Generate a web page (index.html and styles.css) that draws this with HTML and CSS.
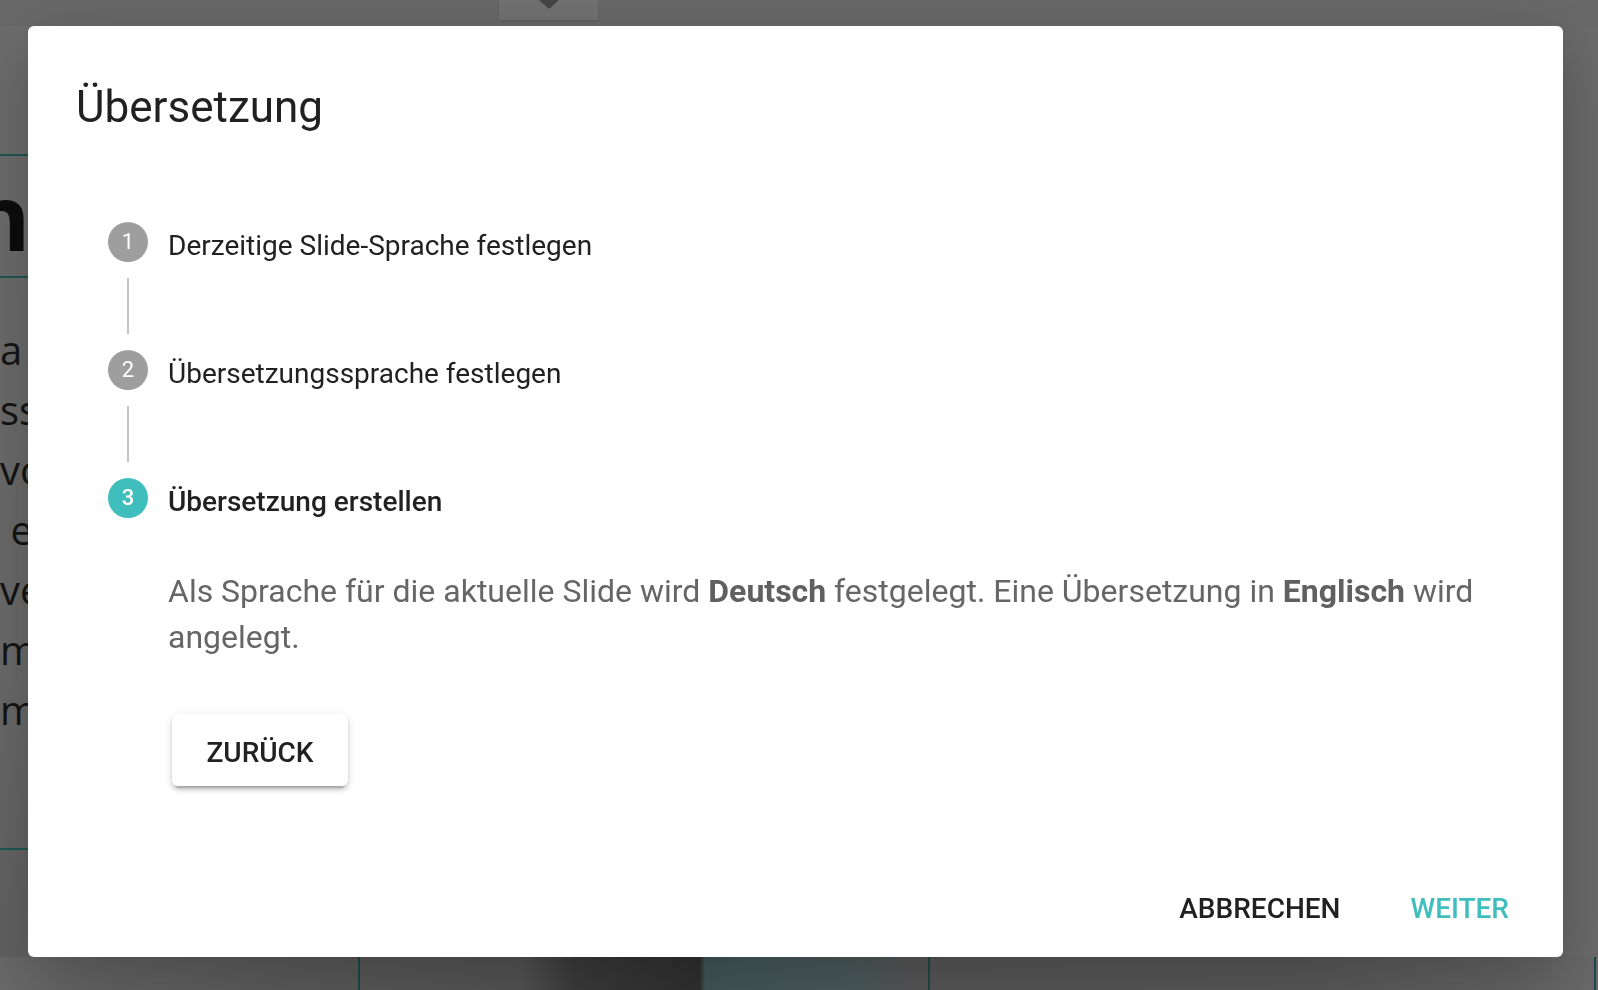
FILE: index.html
```html
<!DOCTYPE html>
<html lang="de">
<head>
  <meta charset="UTF-8">
  <title>Übersetzung</title>
  <link rel="stylesheet" href="styles.css">
</head>
<body>
  <div class="page">
    <div class="toolbar">
      <div class="tab"><span class="caret"></span></div>
    </div>
    <div class="workspace">
      <div class="slide">
        <div class="rule rule-top"></div>
        <div class="slide-title">nd</div>
        <div class="rule"></div>
        <div class="slide-text">
          <p>a  </p>
          <p>ssen</p>
          <p>vollen</p>
          <p> ein</p>
          <p>ver</p>
          <p>mit</p>
          <p>mehr</p>
        </div>
        <div class="rule rule-bottom"></div>
      </div>
    </div>
    <div class="filmstrip"></div>
  </div>

  <div class="overlay">
    <div class="dialog">
      <h1 class="dialog-title">Übersetzung</h1>

      <div class="dialog-body">
        <div class="stepper">
          <div class="step done">
            <span class="step-icon">1</span>
            <span class="step-label">Derzeitige Slide-Sprache festlegen</span>
          </div>
          <div class="connector"></div>
          <div class="step done">
            <span class="step-icon">2</span>
            <span class="step-label">Übersetzungssprache festlegen</span>
          </div>
          <div class="connector"></div>
          <div class="step active">
            <span class="step-icon">3</span>
            <span class="step-label">Übersetzung erstellen</span>
          </div>

          <div class="step-content">
            <p class="description">Als Sprache für die aktuelle Slide wird <strong>Deutsch</strong> festgelegt. Eine Übersetzung in <strong>Englisch</strong> wird angelegt.</p>
            <button class="btn btn-raised" type="button">Zurück</button>
          </div>
        </div>
      </div>

      <div class="dialog-actions">
        <button class="btn btn-text" type="button">Abbrechen</button>
        <button class="btn btn-text primary" type="button">Weiter</button>
      </div>
    </div>
  </div>
</body>
</html>
```

FILE: styles.css
```css
html, body {
  margin: 0;
  height: 100%;
  overflow: hidden;
}
body {
  font-family: Roboto, "Liberation Sans", sans-serif;
  background: #686968;
}

/* page behind the dialog */
.page {
  height: 100%;
  display: flex;
  flex-direction: column;
}
.toolbar {
  height: 26px;
  flex: none;
  background: #686968;
}
.tab {
  width: 99px;
  height: 20px;
  margin-left: 499px;
  background: #727272;
  box-shadow: 0 1px 2px rgba(0,0,0,0.15);
  display: flex;
  justify-content: center;
}
.caret {
  width: 0;
  height: 0;
  border-left: 10px solid transparent;
  border-right: 10px solid transparent;
  border-top: 9px solid #454545;
}
.workspace {
  flex: 1;
  background: linear-gradient(90deg, #6f6f6f 0%, #5a5a5a 30%, #585858 60%, #606060 90%, #6c6c6c 100%);
  overflow: hidden;
}
.slide {
  width: 60px;
  background: linear-gradient(180deg, #6d6d6d, #6b6b6b 70%, #626262);
  height: 100%;
  overflow: hidden;
}
.rule {
  height: 2px;
  background: #1f5757;
}
.rule-top { margin-top: 128px; }
.rule-bottom { margin-top: 108px; }
.slide-title {
  font-family: "Open Sans", sans-serif;
  font-weight: 700;
  font-size: 92px;
  line-height: 120px;
  color: #0d0d0d;
  margin-left: -30px;
}
.slide-text {
  font-family: "Open Sans", sans-serif;
  font-size: 40px;
  color: #151515;
  padding-top: 42px;
}
.slide-text p {
  margin: 0;
  line-height: 60px;
  white-space: pre;
}
.filmstrip {
  height: 33px;
  flex: none;
  background:
    linear-gradient(90deg, transparent 358px, #1d4a4a 358px, #1d4a4a 360px, transparent 360px,
      transparent 928px, #1d4a4a 928px, #1d4a4a 930px, transparent 930px,
      transparent 1594px, #1d4a4a 1594px, #1d4a4a 1596px, transparent 1596px),
    linear-gradient(90deg, #6a6a6a 0, #5c5c5c 300px, #555 520px, #3c3c3c 575px, #303030 700px, #44585a 705px, #4d5b5c 860px, #585858 912px, #5a5a5a 1300px, #6a6a6a 1598px);
}

/* dialog */
.overlay {
  position: fixed;
  inset: 0;
  display: flex;
  padding: 26px 35px 33px 28px;
}
.dialog {
  flex: 1;
  display: flex;
  flex-direction: column;
  background: #fff;
  border-radius: 6px;
  box-shadow: 0 22px 70px rgba(0,0,0,0.25);
  padding: 55px 48px 12px 48px;
}
.dialog-title {
  margin: 0;
  font-size: 44px;
  font-weight: 400;
  line-height: 52px;
  color: #212121;
}
.dialog-body {
  flex: 1;
}
.stepper {
  margin: 89px 0 0 32px;
}
.step {
  display: flex;
  align-items: center;
  height: 40px;
}
.step-icon {
  width: 40px;
  height: 40px;
  border-radius: 50%;
  background: #9e9e9e;
  color: #fff;
  font-size: 22px;
  line-height: 40px;
  text-align: center;
  flex: none;
}
.step.active .step-icon {
  background: #40bebd;
  font-weight: 500;
}
.step-label {
  margin-left: 20px;
  font-size: 28px;
  line-height: 44px;
  color: #212121;
  padding-top: 7px;
}
.step.active .step-label {
  font-weight: 500;
}
.connector {
  width: 2px;
  height: 56px;
  margin: 16px 0 16px 19px;
  background: #c4c4c4;
}
.step-content {
  margin: 50px 0 0 60px;
}
.description {
  margin: 0;
  font-size: 32px;
  line-height: 46px;
  color: #666;
}
.description strong {
  font-weight: 700;
  color: #606060;
}

.btn {
  font-family: Roboto, "Liberation Sans", sans-serif;
  font-size: 28px;
  font-weight: 500;
  text-transform: uppercase;
  letter-spacing: 0;
  color: #212121;
  background: none;
  border: none;
  cursor: pointer;
}
.btn-raised {
  margin: 54px 0 0 4px;
  width: 176px;
  height: 72px;
  padding: 4px 0 0;
  background: #fff;
  border-radius: 6px;
  box-shadow: 0 6px 2px -4px rgba(0,0,0,0.2), 0 4px 4px rgba(0,0,0,0.14), 0 2px 10px rgba(0,0,0,0.12);
}
.dialog-actions {
  display: flex;
  justify-content: flex-end;
  gap: 38px;
  margin-right: -10px;
}
.btn-text {
  padding: 12px 16px;
  line-height: 49px;
  border-radius: 6px;
}
.btn-text.primary {
  color: #40bebd;
}
```
